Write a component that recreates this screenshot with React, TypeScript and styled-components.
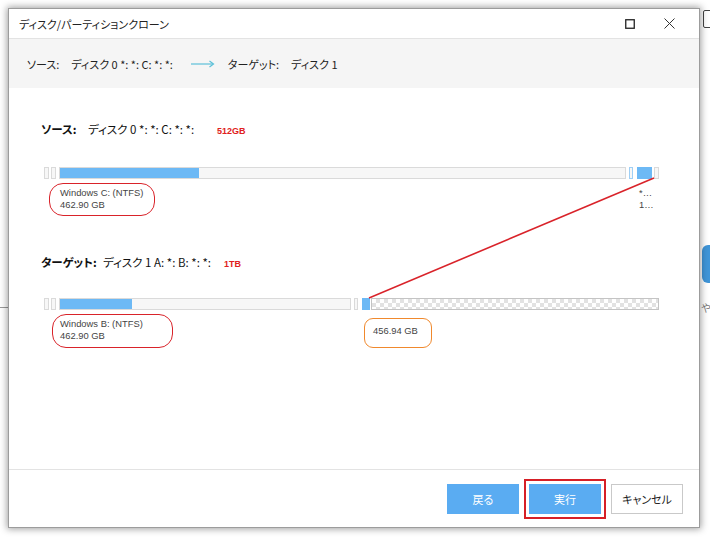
import React from "react";
import styled, { createGlobalStyle } from "styled-components";

const Global = createGlobalStyle`
  html, body { margin: 0; padding: 0; background: #ffffff; }
  body { font-family: "Noto Sans CJK JP", "Liberation Sans", sans-serif; color: #222; }
`;

const JP = `"Noto Sans CJK JP", "Liberation Sans", sans-serif`;

const Desktop = styled.div`
  position: relative;
  width: 710px;
  height: 539px;
  overflow: hidden;
  background: #ffffff;
`;

const BackIcon = styled.div`
  position: absolute;
  left: 703px;
  top: 10px;
  width: 10px;
  height: 16px;
  border: 1.5px solid #444;
  border-radius: 2px;
`;

const BackBlob = styled.div`
  position: absolute;
  left: 702px;
  top: 245px;
  width: 20px;
  height: 38px;
  background: #3f95d8;
  border-radius: 6px 0 0 6px;
`;

const BackGlyph = styled.div`
  position: absolute;
  left: 701px;
  top: 300px;
  font-size: 10px;
  color: #777;
  font-family: ${JP};
`;

const BackLine = styled.div`
  position: absolute;
  left: 0;
  top: 307px;
  width: 8px;
  height: 1px;
  background: #999;
`;

const Window = styled.div`
  position: absolute;
  left: 8px;
  top: 8px;
  width: 692px;
  height: 520px;
  box-sizing: border-box;
  border: 1px solid #9c9c9c;
  background: #fff;
  box-shadow: 0 0 7px 1px rgba(0, 0, 0, 0.38);
  display: flex;
  flex-direction: column;
`;

const TitleBar = styled.div`
  height: 29px;
  flex: none;
  display: flex;
  align-items: center;
  padding-left: 10px;
  border-bottom: 1px solid #e3e3e3;
  font-family: ${JP};
  font-feature-settings: "palt";
  font-size: 11px;
  color: #222;
`;

const Title = styled.div`
  flex: 1;
`;

const WinButtons = styled.div`
  display: flex;
  align-items: center;
  gap: 29px;
  padding-right: 24px;
`;

const Header = styled.div`
  height: 49px;
  flex: none;
  background: #f5f5f5;
  display: flex;
  align-items: center;
  padding-left: 18px;
  font-family: ${JP};
  font-feature-settings: "palt";
  font-size: 11px;
  color: #222;
`;

const HeaderItem = styled.span<{ $gap?: number }>`
  margin-right: ${(p) => p.$gap ?? 0}px;
  white-space: pre;
`;

const Body = styled.div`
  flex: 1;
  padding: 33px 0 0 32px;
  display: flex;
  flex-direction: column;
`;

const DiskHeading = styled.div<{ $top?: number }>`
  display: flex;
  align-items: baseline;
  margin-top: ${(p) => p.$top ?? 0}px;
  font-family: ${JP};
  font-feature-settings: "palt";
  font-size: 11.5px;
  height: 18px;
  color: #111;
`;

const HeadLabel = styled.span<{ $w: number }>`
  font-weight: 700;
  width: ${(p) => p.$w}px;
`;

const HeadDisk = styled.span<{ $w: number }>`
  width: ${(p) => p.$w}px;
  white-space: pre;
`;

const HeadSize = styled.span`
  color: #e02020;
  font-family: "Liberation Sans", sans-serif;
  font-weight: 700;
  font-size: 9px;
`;

const BarRow = styled.div<{ $top: number }>`
  display: flex;
  align-items: flex-start;
  margin-top: ${(p) => p.$top}px;
  margin-left: 3px;
`;

const Partition = styled.div<{ $w: number; $ml?: number }>`
  position: relative;
  width: ${(p) => p.$w}px;
  margin-left: ${(p) => p.$ml ?? 0}px;
  flex: none;
  display: flex;
  flex-direction: column;
`;

const Segment = styled.div<{ $kind: "tick" | "blueTick" | "bar" | "block" | "free" }>`
  height: 12px;
  box-sizing: border-box;
  position: relative;
  overflow: hidden;
  border: 1px solid
    ${(p) =>
      p.$kind === "blueTick" ? "#9fcff5" : p.$kind === "block" ? "#6db9f5" : p.$kind === "free" ? "#c4c4c4" : "#dadada"};
  background: ${(p) =>
    p.$kind === "block"
      ? "#6db9f5"
      : p.$kind === "free"
      ? "repeating-conic-gradient(#e2e2e2 0 25%, #ffffff 0 50%) 0 0 / 8px 8px"
      : "#f7f7f7"};
`;

const Fill = styled.div`
  position: absolute;
  left: 0;
  top: 0;
  bottom: 0;
  background: #6db9f5;
`;

const PartLabel = styled.div<{ $top?: number; $pl?: number }>`
  position: relative;
  margin-top: ${(p) => p.$top ?? 8}px;
  padding-left: ${(p) => p.$pl ?? 1}px;
  font-family: "Liberation Sans", sans-serif;
  font-size: 9.4px;
  line-height: 12px;
  color: #444;
  white-space: nowrap;
`;

const Mark = styled.div<{ $c: string; $l: number; $t: number; $w: number; $h: number; $r: number }>`
  position: absolute;
  left: ${(p) => p.$l}px;
  top: ${(p) => p.$t}px;
  width: ${(p) => p.$w}px;
  height: ${(p) => p.$h}px;
  box-sizing: border-box;
  border: 1.5px solid ${(p) => p.$c};
  border-radius: ${(p) => p.$r}px;
  pointer-events: none;
`;

const Overlay = styled.svg`
  position: absolute;
  left: 0;
  top: 0;
  pointer-events: none;
`;

const Footer = styled.div`
  height: 57px;
  flex: none;
  border-top: 1px solid #e3e3e3;
  display: flex;
  align-items: center;
  justify-content: flex-end;
  gap: 5px;
  padding-right: 16px;
`;

const Button = styled.button<{ $primary?: boolean }>`
  width: 72px;
  height: 30px;
  box-sizing: border-box;
  border: 1px solid ${(p) => (p.$primary ? "#5aacf2" : "#c9c9c9")};
  background: ${(p) => (p.$primary ? "#5aacf2" : "#ffffff")};
  color: ${(p) => (p.$primary ? "#ffffff" : "#222")};
  font-family: ${JP};
  font-feature-settings: "palt";
  font-size: 11px;
  padding: 0;
  cursor: pointer;
`;

const Highlight = styled.div`
  border: 2px solid #d61f26;
  padding: 3px;
  display: flex;
`;

const Arrow = () => (
  <svg width="24" height="8" viewBox="0 0 24 8" style={{ marginRight: 13 }}>
    <line x1="0" y1="4" x2="22" y2="4" stroke="#5bc0d8" strokeWidth="1.2" />
    <polyline points="18.5,1 22.5,4 18.5,7" fill="none" stroke="#5bc0d8" strokeWidth="1.2" />
  </svg>
);

const MaxIcon = () => (
  <svg width="10" height="10" viewBox="0 0 10 10">
    <rect x="0.75" y="0.75" width="8.5" height="8.5" fill="none" stroke="#222" strokeWidth="1.3" />
  </svg>
);

const CloseIcon = () => (
  <svg width="11" height="11" viewBox="0 0 11 11">
    <path d="M0.5 0.5 L10.5 10.5 M10.5 0.5 L0.5 10.5" stroke="#333" strokeWidth="1" />
  </svg>
);

export default function App() {
  return (
    <Desktop>
      <Global />
      <BackIcon />
      <BackBlob />
      <BackGlyph>や</BackGlyph>
      <BackLine />
      <Window>
        <TitleBar>
          <Title>ディスク/パーティションクローン</Title>
          <WinButtons>
            <MaxIcon />
            <CloseIcon />
          </WinButtons>
        </TitleBar>
        <Header>
          <HeaderItem $gap={12}>ソース:</HeaderItem>
          <HeaderItem $gap={18}>ディスク 0 *: *: C: *: *:</HeaderItem>
          <Arrow />
          <HeaderItem $gap={12}>ターゲット:</HeaderItem>
          <HeaderItem>ディスク 1</HeaderItem>
        </Header>
        <Body>
          <DiskHeading>
            <HeadLabel $w={47}>ソース:</HeadLabel>
            <HeadDisk $w={129}>ディスク 0 *: *: C: *: *:</HeadDisk>
            <HeadSize>512GB</HeadSize>
          </DiskHeading>
          <BarRow $top={28}>
            <Partition $w={5}>
              <Segment $kind="tick" />
            </Partition>
            <Partition $w={5} $ml={2}>
              <Segment $kind="tick" />
            </Partition>
            <Partition $w={567} $ml={3}>
              <Segment $kind="bar">
                <Fill style={{ width: `${(139 / 567) * 100}%` }} />
              </Segment>
              <PartLabel>
                Windows C: (NTFS)
                <br />
                462.90 GB
                <Mark $c="#d9232a" $l={-10} $t={-4} $w={106} $h={33} $r={14} />
              </PartLabel>
            </Partition>
            <Partition $w={4} $ml={3}>
              <Segment $kind="blueTick" />
            </Partition>
            <Partition $w={15} $ml={4}>
              <Segment $kind="block" />
              <PartLabel $pl={2}>
                *…
                <br />
                1…
              </PartLabel>
            </Partition>
            <Partition $w={5} $ml={2}>
              <Segment $kind="tick" />
            </Partition>
          </BarRow>
          <DiskHeading $top={43}>
            <HeadLabel $w={62}>ターゲット:</HeadLabel>
            <HeadDisk $w={121}>ディスク 1 A: *: B: *: *:</HeadDisk>
            <HeadSize>1TB</HeadSize>
          </DiskHeading>
          <BarRow $top={26}>
            <Partition $w={5}>
              <Segment $kind="tick" />
            </Partition>
            <Partition $w={5} $ml={2}>
              <Segment $kind="tick" />
            </Partition>
            <Partition $w={292} $ml={3}>
              <Segment $kind="bar">
                <Fill style={{ width: `${(72 / 292) * 100}%` }} />
              </Segment>
              <PartLabel>
                Windows B: (NTFS)
                <br />
                462.90 GB
                <Mark $c="#d9232a" $l={-7} $t={-4} $w={121} $h={34} $r={14} />
              </PartLabel>
            </Partition>
            <Partition $w={4} $ml={3}>
              <Segment $kind="tick" />
            </Partition>
            <Partition $w={8} $ml={4}>
              <Segment $kind="block" />
            </Partition>
            <Partition $w={288} $ml={1}>
              <Segment $kind="free" />
              <PartLabel $top={15} $pl={2}>
                456.94 GB
                <Mark $c="#f0892d" $l={-7} $t={-7} $w={68} $h={30} $r={9} />
              </PartLabel>
            </Partition>
          </BarRow>
        </Body>
        <Footer>
          <Button $primary>戻る</Button>
          <Highlight>
            <Button $primary>実行</Button>
          </Highlight>
          <Button>キャンセル</Button>
        </Footer>
      </Window>
      <Overlay width="710" height="539">
        <line x1="654" y1="178" x2="369" y2="298" stroke="#d9232a" strokeWidth="1.6" />
      </Overlay>
    </Desktop>
  );
}
